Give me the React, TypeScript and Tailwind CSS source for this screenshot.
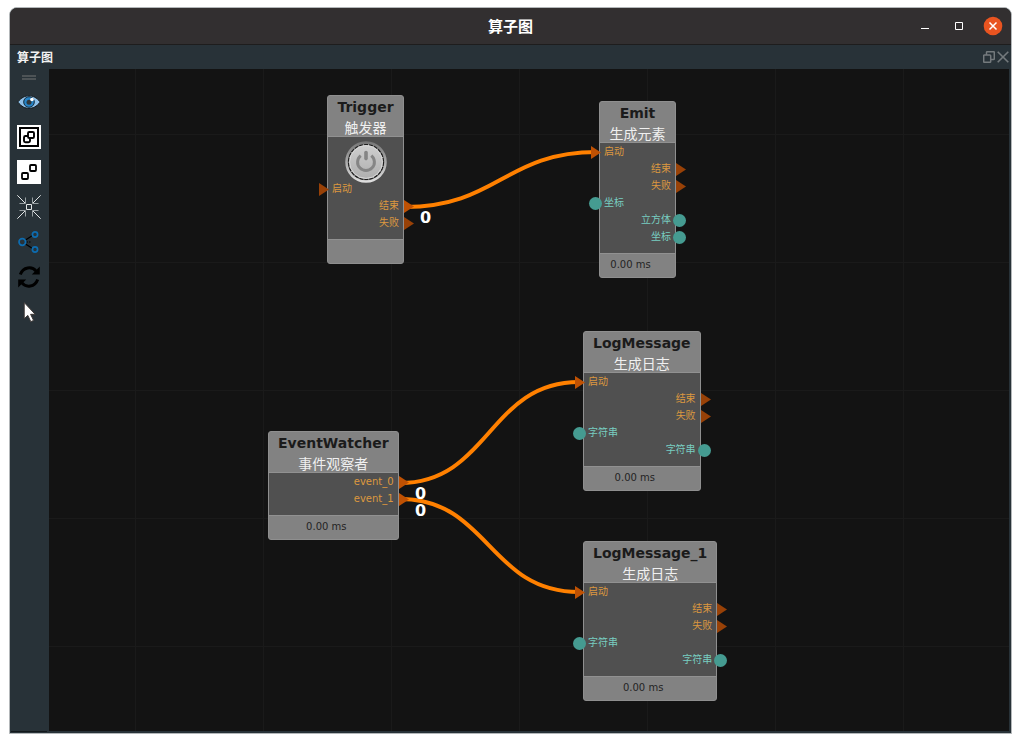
type PortKind = "flow" | "data";

type Port = {
  side: "in" | "out";
  kind: PortKind;
  label: string;
  linked?: boolean;
};

type GraphNode = {
  title: string;
  subtitle: string;
  place: string;
  time: string;
  button?: boolean;
  ports: Port[];
};

const logPorts: Port[] = [
  { side: "in", kind: "flow", label: "启动", linked: true },
  { side: "out", kind: "flow", label: "结束" },
  { side: "out", kind: "flow", label: "失败" },
  { side: "in", kind: "data", label: "字符串" },
  { side: "out", kind: "data", label: "字符串" },
];

const nodes: GraphNode[] = [
  {
    title: "Trigger",
    subtitle: "触发器",
    place: "left-[278px] top-[26px]",
    time: "",
    button: true,
    ports: [
      { side: "in", kind: "flow", label: "启动" },
      { side: "out", kind: "flow", label: "结束", linked: true },
      { side: "out", kind: "flow", label: "失败" },
    ],
  },
  {
    title: "Emit",
    subtitle: "生成元素",
    place: "left-[550px] top-[32px]",
    time: "0.00 ms",
    ports: [
      { side: "in", kind: "flow", label: "启动", linked: true },
      { side: "out", kind: "flow", label: "结束" },
      { side: "out", kind: "flow", label: "失败" },
      { side: "in", kind: "data", label: "坐标" },
      { side: "out", kind: "data", label: "立方体" },
      { side: "out", kind: "data", label: "坐标" },
    ],
  },
  {
    title: "LogMessage",
    subtitle: "生成日志",
    place: "left-[534px] top-[262px]",
    time: "0.00 ms",
    ports: logPorts,
  },
  {
    title: "EventWatcher",
    subtitle: "事件观察者",
    place: "left-[219px] top-[362px]",
    time: "0.00 ms",
    ports: [
      { side: "out", kind: "flow", label: "event_0", linked: true },
      { side: "out", kind: "flow", label: "event_1", linked: true },
    ],
  },
  {
    title: "LogMessage_1",
    subtitle: "生成日志",
    place: "left-[534px] top-[472px]",
    time: "0.00 ms",
    ports: logPorts,
  },
];

const wires = [
  "M356 138 C448 138 456 83 548 83",
  "M351 414 C440 414 440 313 530 313",
  "M351 430 C440 430 440 523 530 523",
];

const counters = [
  { value: 0, place: "left-[371px] top-[139px]" },
  { value: 0, place: "left-[366px] top-[415px]" },
  { value: 0, place: "left-[366px] top-[432px]" },
];

const Marker = ({ port }: { port: Port }) => {
  if (port.kind === "data") {
    return (
      <span
        className={`absolute top-[3px] h-[13px] w-[13px] rounded-full bg-[#459b91] ${
          port.side === "in" ? "-left-[11px]" : "-right-[11px]"
        }`}
      />
    );
  }
  return (
    <svg
      viewBox="0 0 10 13"
      className={`absolute top-[3px] h-[13px] w-[10px] ${
        port.side === "in" ? "-left-[9px]" : "-right-[11px]"
      } ${port.linked ? "text-[#bf5103]" : "text-[#984107]"}`}
      fill="currentColor"
    >
      <path d="M0 0 10 6.5 0 13Z" />
    </svg>
  );
};

const PowerButton = () => (
  <button aria-label="触发" className="mx-auto mt-1 -mb-[3px] block h-[42px] w-[42px]">
    <svg viewBox="0 0 42 42" className="h-full w-full" fill="none">
      <defs>
        <linearGradient id="ring" x1="0" y1="0" x2="0" y2="1">
          <stop offset="0" stopColor="#777" />
          <stop offset="1" stopColor="#dedede" />
        </linearGradient>
        <linearGradient id="cap" x1="0" y1="0" x2="0" y2="1">
          <stop offset="0" stopColor="#cfcfcf" />
          <stop offset="1" stopColor="#aeaeae" />
        </linearGradient>
      </defs>
      <circle cx="21" cy="21" r="19.500" fill="#777" stroke="url(#ring)" strokeWidth="2.500" />
      <circle cx="21" cy="21" r="17.500" fill="url(#cap)" stroke="#1d1d1d" strokeWidth="1.200" strokeDasharray="4 1" />
      <circle cx="21" cy="21" r="16.400" stroke="#d8d8d8" strokeWidth="1" />
      <path d="M15.7 14.600a8.400 8.400 0 1 0 10.600 0" stroke="#858585" strokeWidth="3" />
      <path d="M21 11.600v6" stroke="#858585" strokeWidth="3.600" strokeLinecap="round" />
    </svg>
  </button>
);

const NodeCard = ({ node }: { node: GraphNode }) => (
  <article
    className={`absolute min-w-[77px] rounded-[3px] border border-[#8f8f8f] bg-[#828282] ${node.place}`}
  >
    <header className="h-10 px-[9px] text-center">
      <h2 className="pt-[2px] text-[14px] leading-[18px] font-bold text-[#1b1b1b]">
        {node.title}
      </h2>
      <p className="text-[14px] leading-[24px] text-[#f0f0f0]">{node.subtitle}</p>
    </header>
    <div className="flow-root border-y border-[#919191] bg-[#505050] pb-2">
      {node.button && <PowerButton />}
      <ul>
        {node.ports.map((port, index) => (
          <li
            key={index}
            className={`relative flex h-[17px] items-center px-1 text-[10px] leading-[17px] ${
              port.side === "in" ? "justify-start" : "justify-end"
            } ${port.kind === "flow" ? "text-[#dc983f]" : "text-[#78cec1]"}`}
          >
            {port.label}
            <Marker port={port} />
          </li>
        ))}
      </ul>
    </div>
    <footer className="h-[23px] pr-[14px] text-center text-[10px] leading-[22px] text-[#242424]">
      {node.time}
    </footer>
  </article>
);

const tools = [
  {
    name: "显示",
    icon: (
      <svg viewBox="0 0 24 24" className="h-6 w-6">
        <path d="M.7 12C4.500 7.500 8 5.800 12 5.800S19.500 7.500 23.300 12C19.500 16.700 16 18.400 12 18.400S4.500 16.700.7 12Z" fill="#8fc0e8" stroke="#14181a" strokeWidth="1" />
        <circle cx="12" cy="12" r="5.300" fill="#2583c6" stroke="#152b3b" strokeWidth="1" />
        <circle cx="12" cy="12.300" r="2.500" fill="#30373b" />
        <circle cx="15" cy="9.500" r="1.800" fill="#fff" />
      </svg>
    ),
  },
  {
    name: "组合",
    icon: (
      <svg viewBox="0 0 24 24" className="h-6 w-6" fill="none" stroke="#000">
        <path d="M0 0h24v24H0z" fill="#fff" stroke="none" />
        <path d="M3 3h18v18H3z" strokeWidth="2" />
        <rect x="11" y="7" width="6" height="6" rx="1.300" strokeWidth="1.900" />
        <path d="M11 11H8.500Q7 11 7 12.500V16Q7 17.200 8.500 17.200H11.500Q13 17.200 13 16V13" strokeWidth="1.900" />
      </svg>
    ),
  },
  {
    name: "拆分",
    icon: (
      <svg viewBox="0 0 24 24" className="h-6 w-6" fill="none" stroke="#000" strokeWidth="1.8">
        <path d="M0 0h24v24H0z" fill="#fff" stroke="none" />
        <rect x="13" y="5" width="6" height="6" rx="1" />
        <rect x="5" y="13" width="6" height="6" rx="1" />
      </svg>
    ),
  },
  {
    name: "居中",
    icon: (
      <svg viewBox="0 0 24 24" className="h-6 w-6" fill="none" stroke="#e2e5e6" strokeWidth="1">
        <path d="M9.500 9.500h5v5h-5z" />
        <path d="m.3.3 7.700 7.700M23.700.3 16 8M.3 23.700 8 16M23.700 23.700 16 16" />
        <path d="M2.500 8.500h6v-6M21.500 8.500h-6v-6M2.500 15.500h6v6M21.500 15.500h-6v6" stroke="#98a0a3" />
      </svg>
    ),
  },
  {
    name: "布局",
    icon: (
      <svg viewBox="0 0 24 24" className="h-6 w-6" fill="none">
        <path d="m8.500 10 7-4.500M8.500 14l7 4.500" stroke="#000" strokeWidth="1.300" />
        <path d="M9.500 12h4" stroke="#000" strokeDasharray="1.500 1" />
        <g stroke="#0d6cb0" strokeWidth="1.700">
          <circle cx="5.300" cy="12" r="3.300" />
          <circle cx="18" cy="4.500" r="2.600" />
          <circle cx="18" cy="19.500" r="2.600" />
        </g>
      </svg>
    ),
  },
  {
    name: "刷新",
    icon: (
      <svg viewBox="0 0 24 24" className="h-6 w-6" fill="none" stroke="#000" strokeWidth="3">
        <path d="M3.300 9.500C6 1.800 15 .8 19.300 6.300M20.700 14.500C18 22.200 9 23.200 4.700 17.700" />
        <path d="M22.800 1.600v7.900h-8ZM1.200 22.400v-7.900h8Z" fill="#000" stroke="none" />
      </svg>
    ),
  },
  {
    name: "选择",
    icon: (
      <svg viewBox="0 0 24 24" className="h-6 w-6">
        <path d="M7.200 2.500v16.300l3.600-3.400 3 6.300 2.800-1.300-3-6.100h4.600Z" fill="#fff" stroke="#3b3634" strokeWidth="1" />
      </svg>
    ),
  },
];

const App = () => (
  <main className="h-screen overflow-hidden bg-white px-[9px] pt-[7px] pb-[9px] font-['DejaVu_Sans','Noto_Sans_CJK_SC',sans-serif]">
    <div className="flex h-full flex-col overflow-hidden rounded-t-[8px] border border-[#b3b7b9] bg-[#283238]">
      <header className="grid h-[37px] shrink-0 grid-cols-3 items-center border-b border-[#1e1d1d] bg-[#322f30]">
        <h1 className="col-start-2 pt-[2px] text-center text-[15px] leading-5 font-bold text-white">
          算子图
        </h1>
        <div className="flex items-center justify-end gap-[15px] pr-2 text-white">
          <button aria-label="最小化">
            <svg viewBox="0 0 18 20" className="h-5 w-[18px]" stroke="currentColor">
              <path d="M4 12.500h8" />
            </svg>
          </button>
          <button aria-label="最大化">
            <svg viewBox="0 0 18 20" className="h-5 w-[18px]" fill="none" stroke="currentColor">
              <path d="M5.500 6.500h7v7h-7z" />
            </svg>
          </button>
          <button aria-label="关闭">
            <svg viewBox="0 0 20 20" className="h-5 w-5">
              <circle cx="10" cy="10" r="9.300" fill="#e95420" />
              <path d="m6.500 6.500 7 7m0-7-7 7" stroke="currentColor" strokeWidth="1.500" />
            </svg>
          </button>
        </div>
      </header>

      <div className="flex h-6 shrink-0 items-center justify-between pr-[2px] pl-[7px]">
        <h2 className="pt-[2px] text-[12px] leading-[22px] font-bold text-[#f2f2f2]">算子图</h2>
        <div className="flex items-center gap-[2px] text-[#747a7d]">
          <button aria-label="浮动窗口">
            <svg viewBox="0 0 12 12" className="h-3 w-3" fill="none" stroke="currentColor" strokeWidth="1.500">
              <rect x=".7" y="4" width="7" height="7.300" rx=".8" />
              <path d="M3.500 4V1.500Q3.500.7 4.300.7H10.500Q11.300.7 11.300 1.500V7.700Q11.300 8.500 10.500 8.500H7.700" />
            </svg>
          </button>
          <button aria-label="关闭面板">
            <svg viewBox="0 0 12 12" className="h-3 w-3" stroke="currentColor" strokeWidth="1.600">
              <path d="m.7.7 10.600 10.600m0-10.600L.7 11.300" />
            </svg>
          </button>
        </div>
      </div>

      <div className="flex min-h-0 grow pr-[2px]">
        <nav className="flex w-[39px] shrink-0 flex-col items-center pr-[2px] pl-px">
          <div className="mt-[6px] mb-[10px] h-[5px] w-[14px] shrink-0 border-y-2 border-[#4d5356]" />
          <div className="flex grow flex-col gap-[11px]">
            {tools.map((tool) => (
              <button key={tool.name} aria-label={tool.name} className="h-6 w-6">
                {tool.icon}
              </button>
            ))}
          </div>
          <div className="mb-px h-px w-full bg-[#12181b]" />
        </nav>

        <section className="relative mb-[2px] grow overflow-hidden bg-[#131313]">
          <svg className="absolute inset-0 h-full w-full" fill="none">
            <defs>
              <pattern id="grid" x="86" y="65" width="128" height="128" patternUnits="userSpaceOnUse">
                <path d="M.5 0v128M0 .5h128" stroke="#1a1a1a" />
              </pattern>
            </defs>
            <rect width="100%" height="100%" fill="url(#grid)" />
            {wires.map((d) => (
              <path key={d} d={d} stroke="#ff8000" strokeWidth="4" />
            ))}
          </svg>
          {nodes.map((node) => (
            <NodeCard key={node.title} node={node} />
          ))}
          {counters.map((counter, index) => (
            <span
              key={index}
              className={`absolute text-[16px] leading-5 font-bold text-white ${counter.place}`}
            >
              {counter.value}
            </span>
          ))}
        </section>
      </div>
    </div>
  </main>
);

export default App;
